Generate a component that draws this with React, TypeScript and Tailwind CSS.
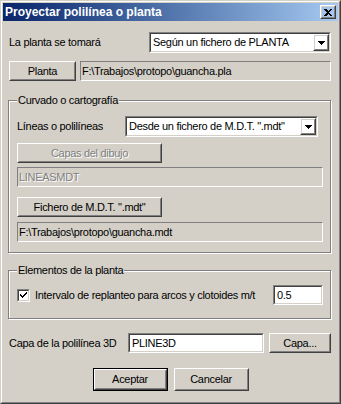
import React from 'react';

// classic win2000 bevels
const Raised: React.FC<{ className?: string; disabled?: boolean; children: React.ReactNode }> = ({ className = '', disabled, children }) => (
  <div className={`border border-t-white border-l-white border-r-[#404040] border-b-[#404040] ${className}`}>
    <div
      className={`h-full border border-t-[#d4d0c8] border-l-[#d4d0c8] border-r-[#808080] border-b-[#808080] flex items-center justify-center ${
        disabled ? 'text-[#808080] [text-shadow:1px_1px_0_#fff]' : 'text-black'
      }`}
    >
      {children}
    </div>
  </div>
);

const Sunken: React.FC<{ className?: string; children?: React.ReactNode }> = ({ className = '', children }) => (
  <div className={`border border-t-[#808080] border-l-[#808080] border-r-white border-b-white ${className}`}>
    <div className="h-full border border-t-[#404040] border-l-[#404040] border-r-[#d4d0c8] border-b-[#d4d0c8] bg-white flex items-center">
      {children}
    </div>
  </div>
);

const StaticField: React.FC<{ className?: string; disabled?: boolean; children: React.ReactNode }> = ({ className = '', disabled, children }) => (
  <div
    className={`border border-t-[#808080] border-l-[#808080] border-r-white border-b-white flex items-center pl-[1px] ${
      disabled ? 'text-[#808080] [text-shadow:1px_1px_0_#fff]' : 'text-black'
    } ${className}`}
  >
    {children}
  </div>
);

const DownArrow = () => (
  <svg width="7" height="4" viewBox="0 0 7 4" shapeRendering="crispEdges">
    <rect x="0" y="0" width="7" height="1" fill="#000" />
    <rect x="1" y="1" width="5" height="1" fill="#000" />
    <rect x="2" y="2" width="3" height="1" fill="#000" />
    <rect x="3" y="3" width="1" height="1" fill="#000" />
  </svg>
);

const Combo: React.FC<{ className?: string; value: string }> = ({ className = '', value }) => (
  <Sunken className={className}>
    <span className="flex-1 pl-[2px] whitespace-nowrap overflow-hidden">{value}</span>
    <Raised className="w-[16px] h-full">
      <DownArrow />
    </Raised>
  </Sunken>
);

const GroupBox: React.FC<{ title: string; className?: string; children: React.ReactNode }> = ({ title, className = '', children }) => (
  <div className={`relative border border-[#808080] shadow-[inset_1px_1px_0_#fff,1px_1px_0_#fff] ${className}`}>
    <span className="absolute left-[8px] top-[-8px] bg-[#d4d0c8] px-[1px] leading-[14px]">{title}</span>
    {children}
  </div>
);

export default function App() {
  return (
    <div className="w-[341px] h-[404px] bg-[#d4d0c8] text-[11px] leading-none text-black font-[Liberation_Sans,Arial,sans-serif] border border-t-[#d4d0c8] border-l-[#d4d0c8] border-r-[#404040] border-b-[#404040]">
      <div className="h-full border border-t-white border-l-white border-r-[#808080] border-b-[#808080] p-[1px] flex flex-col">
        {/* Title bar */}
        <div className="h-[18px] bg-gradient-to-r from-[#0a246a] to-[#a6caf0] flex items-center justify-between pl-[2px] pr-[2px]">
          <span className="text-white font-bold text-[12px]">Proyectar polilínea o planta</span>
          <Raised className="w-[16px] h-[14px]">
            <svg width="8" height="7" viewBox="0 0 8 7" shapeRendering="crispEdges">
              <path d="M0 0h2l2 2 2-2h2L5 3.5 8 7H6L4 5 2 7H0l3-3.5z" fill="#000" />
            </svg>
          </Raised>
        </div>

        {/* Body */}
        <div className="flex-1 flex flex-col pl-[5px] pr-[7px] tracking-[-0.3px]">
          <div className="mt-[11px] flex items-center justify-between">
            <span className="ml-[1px]">La planta se tomará</span>
            <Combo className="w-[182px] h-[21px]" value="Según un fichero de PLANTA" />
          </div>

          <div className="mt-[8px] flex items-center gap-[4px] ml-[1px]">
            <Raised className="w-[67px] h-[20px]">Planta</Raised>
            <StaticField className="flex-1 h-[20px]">F:\Trabajos\protopo\guancha.pla</StaticField>
          </div>

          <GroupBox title="Curvado o cartografía" className="mt-[19px] h-[153px] pt-[15px] pl-[8px] pr-[7px]">
            <div className="flex items-center">
              <span className="w-[108px]">Líneas o polilíneas</span>
              <Combo className="w-[193px] h-[21px]" value={'Desde un fichero de M.D.T. ".mdt"'} />
            </div>
            <Raised disabled className="mt-[6px] w-[145px] h-[20px]">Capas del dibujo</Raised>
            <StaticField disabled className="mt-[4px] h-[20px]">LINEASMDT</StaticField>
            <Raised className="mt-[10px] w-[145px] h-[20px]">Fichero de M.D.T. ".mdt"</Raised>
            <StaticField className="mt-[5px] h-[20px]">F:\Trabajos\protopo\guancha.mdt</StaticField>
          </GroupBox>

          <GroupBox title="Elementos de la planta" className="mt-[17px] h-[49px] pt-[14px] pl-[8px] pr-[7px]">
            <div className="flex items-center">
              <Sunken className="w-[13px] h-[13px]">
                <svg width="9" height="9" viewBox="0 0 9 9" shapeRendering="crispEdges">
                  <path d="M1 3h1v1h1v1h1V4h1V3h1V2h1V1h1v2H7v1H6v1H5v1H4v1H3V6H2V5H1z" fill="#000" />
                </svg>
              </Sunken>
              <span className="ml-[5px] flex-1">Intervalo de replanteo para arcos y clotoides m/t</span>
              <Sunken className="w-[50px] h-[20px]">
                <span className="pl-[2px]">0.5</span>
              </Sunken>
            </div>
          </GroupBox>

          <div className="mt-[14px] flex items-center ml-[1px]">
            <span className="w-[119px]">Capa de la polilínea 3D</span>
            <Sunken className="w-[136px] h-[20px]">
              <span className="pl-[2px]">PLINE3D</span>
            </Sunken>
            <Raised className="ml-[5px] flex-1 h-[20px]">Capa...</Raised>
          </div>

          <div className="mt-[15px] flex justify-center gap-[6px] pl-[2px]">
            <div className="w-[75px] h-[23px] border border-black">
              <Raised className="h-full">Aceptar</Raised>
            </div>
            <Raised className="w-[75px] h-[23px]">Cancelar</Raised>
          </div>
        </div>
      </div>
    </div>
  );
}
